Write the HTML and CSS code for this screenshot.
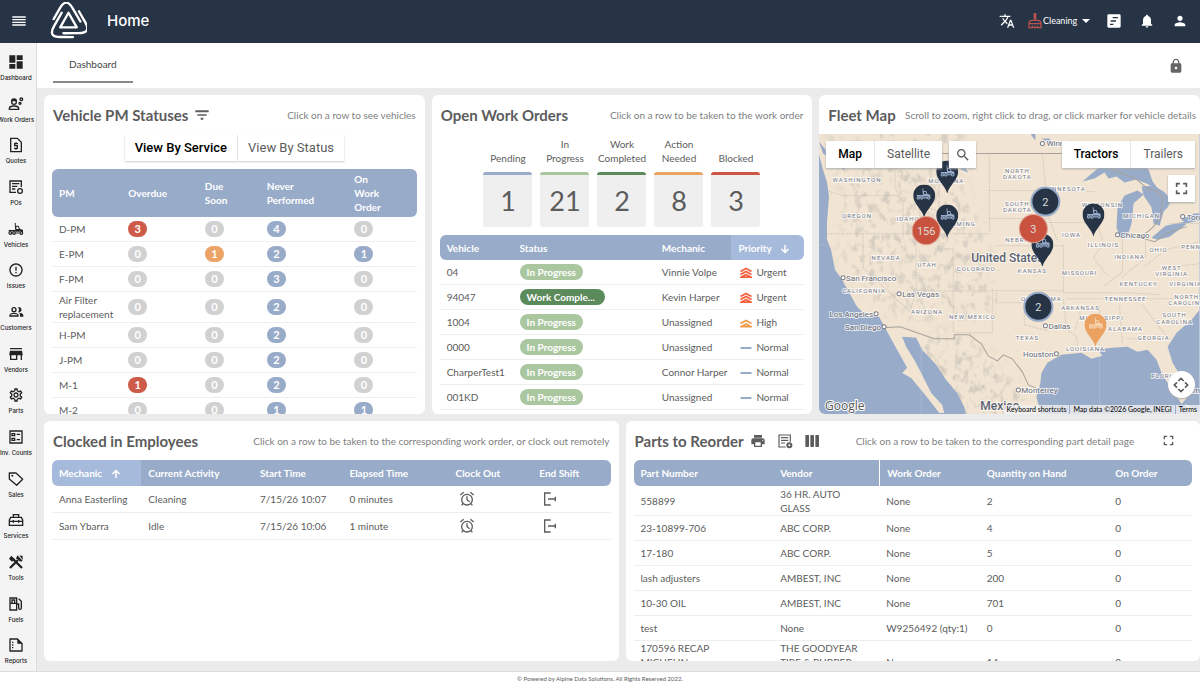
FILE: index.html
```html
<!DOCTYPE html>
<html lang="en">
  <head>
    <meta charset="UTF-8" />
    <meta name="viewport" content="width=device-width, initial-scale=1.0" />
    <title>Home</title>
    <link rel="stylesheet" href="styles.css">
  </head>
  <body>
    <!-- icon sprite -->
    <svg class="sprite" aria-hidden="true">
      <symbol id="i-menu" viewBox="0 0 24 24"><path d="M2 15h20v-2H2v2zm0 4h20v-2H2v2zm0-8h20V9H2v2zm0-6v2h20V5H2z" /></symbol>
      <symbol id="i-translate" viewBox="0 0 24 24"><path d="M12.87 15.07l-2.54-2.51.03-.03c1.74-1.94 2.98-4.17 3.71-6.53H17V4h-7V2H8v2H1v1.99h11.17C11.5 7.92 10.44 9.75 9 11.35 8.07 10.32 7.3 9.19 6.69 8h-2c.73 1.63 1.73 3.17 2.98 4.56l-5.09 5.02L4 19l5-5 3.11 3.11.76-2.04zM18.5 10h-2L12 22h2l1.12-3h4.75L21 22h2l-4.5-12zm-2.62 7l1.62-4.33L19.12 17h-3.24z" /></symbol>
      <symbol id="i-broom" viewBox="0 0 24 24"><path d="M10 0h4v10h-4z" /><path d="M3 22v-6c0-3 2-5 5-5h8c3 0 5 2 5 5v6zM3 16h18M8 22v-3M12 22v-3M16 22v-3" fill="none" stroke="currentColor" stroke-width="2" /></symbol>
      <symbol id="i-note" viewBox="0 0 24 24"><path fill-rule="evenodd" d="M4 2h16a2 2 0 0 1 2 2v16a2 2 0 0 1-2 2H4a2 2 0 0 1-2-2V4a2 2 0 0 1 2-2zM10 6v2h8V6zM7 11v2h8v-2zM6 16v2h5v-2z" /></symbol>
      <symbol id="i-bell" viewBox="0 0 24 24"><path d="M12 22c1.1 0 2-.9 2-2h-4c0 1.1.89 2 2 2zm6-6v-5c0-3.07-1.64-5.64-4.5-6.32V4c0-.83-.67-1.5-1.5-1.5s-1.5.67-1.5 1.5v.68C7.63 5.36 6 7.92 6 11v5l-2 2v1h16v-1l-2-2z" /></symbol>
      <symbol id="i-person" viewBox="0 0 24 24"><path d="M12 12c2.21 0 4-1.79 4-4s-1.79-4-4-4-4 1.79-4 4 1.79 4 4 4zm0 2c-2.67 0-8 1.34-8 4v2h16v-2c0-2.66-5.33-4-8-4z" /></symbol>
      <symbol id="i-lock" viewBox="0 0 24 24"><path d="M18 8h-1V6c0-2.76-2.24-5-5-5S7 3.24 7 6v2H6c-1.1 0-2 .9-2 2v10c0 1.1.9 2 2 2h12c1.1 0 2-.9 2-2V10c0-1.1-.9-2-2-2zm-6 9c-1.1 0-2-.9-2-2s.9-2 2-2 2 .9 2 2-.9 2-2 2zm3.1-9H8.9V6c0-1.71 1.39-3.1 3.1-3.1 1.71 0 3.1 1.39 3.1 3.1v2z" /></symbol>
      <symbol id="i-dashboard" viewBox="0 0 24 24"><path d="M2 13h9V2H2v11zm0 9h9v-7H2v7zm11 0h9V11h-9v11zm0-20v7h9V2h-9z" /></symbol>
      <symbol id="i-work" viewBox="0 0 24 24"><g fill="none" stroke="currentColor" stroke-width="2"><circle cx="9" cy="9" r="3.500" /><path d="M2 20v-1c0-3 4-4 7-4s7 1 7 4v1z" /><circle cx="20" cy="5" r="2" /><circle cx="18" cy="11" r="1.500" /></g><path d="M4.500 8a4.500 4.500 0 0 1 9 0z" /></symbol>
      <symbol id="i-quote" viewBox="0 0 24 24"><g fill="none" stroke="currentColor" stroke-width="2"><path d="M14 2H4v20h16V8z" /><path d="M15 10h-5v3h4v4H9M12 8v2M12 17v2" /></g></symbol>
      <symbol id="i-po" viewBox="0 0 24 24"><g fill="none" stroke="currentColor" stroke-width="2"><path d="M12 20H3V3h17v9M6 7h11M6 11h8M6 15h5" /><circle cx="18" cy="18" r="3.500" /></g></symbol>
      <symbol id="i-truck" viewBox="0 0 24 24"><g fill="none" stroke="currentColor" stroke-width="1.800"><circle cx="3.500" cy="18" r="2" /><circle cx="9" cy="18" r="2" /><circle cx="20" cy="18" r="2" /><path d="M1 14.500h10M11.500 18h6" /></g><path d="M10 3h1.600v4H16l2 5 4.500 1V17h-1a3 3 0 0 0-4.500-1h-6zM12.500 8.500V12h3.800L15 8.500z" fill-rule="evenodd" /></symbol>
      <symbol id="i-issue" viewBox="0 0 24 24"><path d="M11 15h2v2h-2zm0-8h2v6h-2zm.99-5C6.470 2 2 6.480 2 12s4.470 10 9.990 10C17.520 22 22 17.520 22 12S17.520 2 11.990 2zM12 20c-4.420 0-8-3.580-8-8s3.580-8 8-8 8 3.580 8 8-3.580 8-8 8z" /></symbol>
      <symbol id="i-people" viewBox="0 0 24 24"><g fill="none" stroke="currentColor" stroke-width="2"><circle cx="9" cy="8.500" r="3" /><path d="M3 18v-1c0-2 4-3 6-3s6 1 6 3v1z" /></g><path d="M15 4.700a4 4 0 1 1 0 7.600 6 6 0 0 0 0-7.600zM17 13.200c3 .5 6 1.700 6 3.800v2h-5v-2c0-1.500-.4-2.800-1-3.800z" /></symbol>
      <symbol id="i-store" viewBox="0 0 24 24"><path d="M21 3H3v2h18V3zm1 11v-2l-1-5H3l-1 5v2h1v7h11v-7h5v7h2v-7h1zm-10 5H5v-5h7v5z" /></symbol>
      <symbol id="i-gear" viewBox="0 0 24 24"><path d="M19.430 12.980c.04-.32.07-.64.07-.98s-.03-.66-.07-.98l2.110-1.650c.19-.15.24-.42.12-.64l-2-3.460c-.09-.16-.26-.25-.44-.25-.06 0-.12.01-.17.03l-2.490 1c-.52-.4-1.080-.73-1.690-.98l-.38-2.650C14.460 2.180 14.250 2 14 2h-4c-.25 0-.46.18-.49.42l-.38 2.650c-.61.25-1.170.59-1.690.98l-2.490-1c-.06-.02-.12-.03-.18-.03-.17 0-.34.09-.43.25l-2 3.460c-.13.22-.07.49.12.64l2.110 1.650c-.04.32-.07.65-.07.98s.03.66.07.98l-2.110 1.650c-.19.15-.24.42-.12.64l2 3.460c.09.16.26.25.44.25.06 0 .12-.01.17-.03l2.490-1c.52.4 1.080.73 1.690.98l.38 2.650c.03.24.24.42.49.42h4c.25 0 .46-.18.49-.42l.38-2.650c.61-.25 1.170-.59 1.690-.98l2.490 1c.06.02.12.03.18.03.17 0 .34-.09.43-.25l2-3.460c.12-.22.07-.49-.12-.64l-2.110-1.650zm-1.980-1.710c.04.31.05.52.05.73 0 .21-.02.43-.05.73l-.14 1.130.89.7 1.080.84-.7 1.210-1.270-.51-1.040-.42-.9.68c-.43.32-.84.56-1.250.73l-1.060.43-.16 1.130-.2 1.350h-1.400l-.19-1.350-.16-1.130-1.060-.43c-.43-.18-.83-.41-1.230-.71l-.91-.7-1.060.43-1.270.51-.7-1.210 1.080-.84.89-.7-.14-1.130c-.03-.31-.05-.54-.05-.74s.02-.43.05-.73l.14-1.130-.89-.7-1.080-.84.7-1.210 1.270.51 1.040.42.9-.68c.43-.32.84-.56 1.250-.73l1.060-.43.16-1.130.2-1.350h1.390l.19 1.350.16 1.130 1.060.43c.43.18.83.41 1.230.71l.91.7 1.060-.43 1.270-.51.7 1.210-1.070.85-.89.7.14 1.130zM12 8c-2.210 0-4 1.790-4 4s1.790 4 4 4 4-1.790 4-4-1.790-4-4-4zm0 6c-1.100 0-2-.9-2-2s.9-2 2-2 2 .9 2 2-.9 2-2 2z" /></symbol>
      <symbol id="i-count" viewBox="0 0 24 24"><g fill="none" stroke="currentColor" stroke-width="2"><path d="M3 3h18v18H3zM13 8h5M13 16h5" /><path d="M6 7h4v3H6zM6 14h4v3H6z" /></g></symbol>
      <symbol id="i-tag" viewBox="0 0 24 24"><path d="M2 3h10l10 9.500-9 9L2 12z" fill="none" stroke="currentColor" stroke-width="2" stroke-linejoin="round" /><circle cx="6.500" cy="7" r="1.500" /></symbol>
      <symbol id="i-toolbox" viewBox="0 0 24 24"><g fill="none" stroke="currentColor" stroke-width="2"><path d="M8 8V4h8v4M4 8h16l2 4v8H2v-8zM2 14h20M8 12v4M16 12v4" /></g></symbol>
      <symbol id="i-tools" viewBox="0 0 24 24"><g fill="none" stroke="currentColor" stroke-width="3.500"><path d="M3 21L15 9M8 8l13 13" /></g><path d="M1.500 7L5 2.500l5 5-4 4zM14 2l8 8-2.500 1.500-3-1.500-2-2-2.500-1zM17 2l5 1v6z" /></symbol>
      <symbol id="i-fuel" viewBox="0 0 24 24"><g fill="none" stroke="currentColor" stroke-width="2"><path d="M3 21V3h10v18zM3 11h10M13 12h3v6a2 2 0 0 0 4 0V8l-4-4" /><path d="M6 11V6h4v5" /></g></symbol>
      <symbol id="i-report" viewBox="0 0 24 24"><path d="M14 3H3v18h18V10z" fill="none" stroke="currentColor" stroke-width="2" stroke-linejoin="round" /><path d="M14 2l8 8h-8zM6 7h2v2H6zM6 11h2v2H6zM6 15h2v2H6z" /></symbol>
      <symbol id="i-filter" viewBox="0 0 24 24"><path d="M10 19h4v-3h-4v3zM2 5v3h20V5H2zm3 8h14v-2H5v2z" /></symbol>
      <symbol id="i-print" viewBox="0 0 24 24"><path d="M19 8H5c-1.660 0-3 1.340-3 3v6h4v4h12v-4h4v-6c0-1.660-1.340-3-3-3zm-3 11H8v-5h8v5zm3-7c-.55 0-1-.45-1-1s.45-1 1-1 1 .45 1 1-.45 1-1 1zm-1-9H6v4h12V3z" /></symbol>
      <symbol id="i-list" viewBox="0 0 24 24"><path d="M13 21H3V3h17v10M6 7h11M6 11h11M6 15h6" fill="none" stroke="currentColor" stroke-width="1.800" /><circle cx="18.500" cy="18.500" r="4.500" /><circle cx="18.500" cy="18.500" r="1.500" fill="#fff" /></symbol>
      <symbol id="i-columns" viewBox="0 0 24 24"><rect x="2" y="3" width="5.500" height="18" rx="1" /><rect x="9.500" y="3" width="5.500" height="18" rx="1" /><rect x="17" y="3" width="5.500" height="18" rx="1" /></symbol>
      <symbol id="i-full" viewBox="0 0 24 24"><path d="M3 9V3h6M15 3h6v6M21 15v6h-6M9 21H3v-6" fill="none" stroke="currentColor" stroke-width="3" /></symbol>
      <symbol id="i-search" viewBox="0 0 24 24"><path d="M15.500 14h-.79l-.28-.27C15.410 12.590 16 11.110 16 9.500 16 5.910 13.090 3 9.500 3S3 5.910 3 9.500 5.910 16 9.500 16c1.610 0 3.090-.59 4.230-1.570l.27.28v.79l5 4.990L20.490 19l-4.990-5zm-6 0C7.010 14 5 11.990 5 9.500S7.010 5 9.500 5 14 7.010 14 9.500 11.990 14 9.500 14z" /></symbol>
      <symbol id="i-down" viewBox="0 0 24 24"><path d="M12 4v15M5 12l7 7 7-7" fill="none" stroke="currentColor" stroke-width="3" /></symbol>
      <symbol id="i-up" viewBox="0 0 24 24"><path d="M12 20V5M5 12l7-7 7 7" fill="none" stroke="currentColor" stroke-width="3" /></symbol>
      <symbol id="i-alarm" viewBox="0 0 24 24"><g fill="none" stroke="currentColor" stroke-width="2"><circle cx="12" cy="13" r="8" /><path d="M12 8v5l4 3M2 6l5-4M22 6l-5-4M6 19l-2 2.500M18 19l2 2.500" /></g></symbol>
      <symbol id="i-exit" viewBox="0 0 24 24"><path d="M13 3H4v18h9M9 12h12M20 8.500v7" fill="none" stroke="currentColor" stroke-width="2" /></symbol>
      <symbol id="i-urgent" viewBox="0 0 24 24"><path d="M1 9l11-6 11 6M1 15l11-6 11 6M3 20l9-5 9 5z" fill="none" stroke="currentColor" stroke-width="3.500" /></symbol>
      <symbol id="i-high" viewBox="0 0 24 24"><path d="M1 13l11-6 11 6M3 19l9-5 9 5z" fill="none" stroke="currentColor" stroke-width="3.500" /></symbol>
      <symbol id="i-normal" viewBox="0 0 24 24"><path d="M1 12h22" fill="none" stroke="currentColor" stroke-width="4" /></symbol>
      <symbol id="i-pan" viewBox="0 0 24 24"><path d="M8 6l4-4 4 4M8 18l4 4 4-4M6 8l-4 4 4 4M18 8l4 4-4 4" fill="none" stroke="currentColor" stroke-width="2.500" /></symbol>
      <symbol id="pin" viewBox="0 0 22 33"><path d="M11 33C9 25 0 19 0 11a11 11 0 0 1 22 0c0 8-9 14-11 22z" /></symbol>
    </svg>

    <header class="topbar">
      <button class="icon-btn" aria-label="Menu"><svg class="icon"><use href="#i-menu" /></svg></button>
      <svg class="logo" viewBox="-1 -1 38 38">
        <defs><path id="strand" d="M2.700 16.500L9.200 5.300Q15.700-6 22.200 5.300L30.200 19" /></defs>
        <g fill="none" stroke="#fff" stroke-width="2.400" stroke-linecap="round" stroke-linejoin="round">
          <use href="#strand" />
          <use href="#strand" transform="rotate(120 18 20)" />
          <use href="#strand" transform="rotate(240 18 20)" />
          <path d="M18 10l8.500 15h-17z" />
        </g>
      </svg>
      <h1>Home</h1>
      <div class="topbar-right">
        <button class="icon-btn" aria-label="Language"><svg class="icon"><use href="#i-translate" /></svg></button>
        <label class="activity">
          <svg class="icon broom"><use href="#i-broom" /></svg>
          <select aria-label="Activity"><option>Cleaning</option></select>
          <span class="caret"></span>
        </label>
        <button class="icon-btn" aria-label="Notes"><svg class="icon"><use href="#i-note" /></svg></button>
        <button class="icon-btn" aria-label="Notifications"><svg class="icon"><use href="#i-bell" /></svg></button>
        <button class="icon-btn" aria-label="Account"><svg class="icon"><use href="#i-person" /></svg></button>
      </div>
    </header>

    <div class="layout">
      <nav class="sidebar">
        <a href="#"><svg class="icon"><use href="#i-dashboard" /></svg><span>Dashboard</span></a>
        <a href="#"><svg class="icon"><use href="#i-work" /></svg><span>Work Orders</span></a>
        <a href="#"><svg class="icon"><use href="#i-quote" /></svg><span>Quotes</span></a>
        <a href="#"><svg class="icon"><use href="#i-po" /></svg><span>POs</span></a>
        <a href="#"><svg class="icon"><use href="#i-truck" /></svg><span>Vehicles</span></a>
        <a href="#"><svg class="icon"><use href="#i-issue" /></svg><span>Issues</span></a>
        <a href="#"><svg class="icon"><use href="#i-people" /></svg><span>Customers</span></a>
        <a href="#"><svg class="icon"><use href="#i-store" /></svg><span>Vendors</span></a>
        <a href="#"><svg class="icon"><use href="#i-gear" /></svg><span>Parts</span></a>
        <a href="#"><svg class="icon"><use href="#i-count" /></svg><span>Inv. Counts</span></a>
        <a href="#"><svg class="icon"><use href="#i-tag" /></svg><span>Sales</span></a>
        <a href="#"><svg class="icon"><use href="#i-toolbox" /></svg><span>Services</span></a>
        <a href="#"><svg class="icon"><use href="#i-tools" /></svg><span>Tools</span></a>
        <a href="#"><svg class="icon"><use href="#i-fuel" /></svg><span>Fuels</span></a>
        <a href="#"><svg class="icon"><use href="#i-report" /></svg><span>Reports</span></a>
      </nav>

      <main>
        <div class="tabs">
          <a href="#" class="tab">Dashboard</a>
          <button class="icon-btn lock" aria-label="Lock layout"><svg class="icon"><use href="#i-lock" /></svg></button>
        </div>

        <div class="board">
          <div class="row three">
            <section class="card">
              <div class="card-head">
                <h2>Vehicle PM Statuses</h2>
                <button class="icon-btn" aria-label="Filter"><svg class="icon"><use href="#i-filter" /></svg></button>
                <p>Click on a row to see vehicles</p>
              </div>
              <div class="toggle">
                <button class="on">View By Service</button>
                <button>View By Status</button>
              </div>
              <table class="pm">
                <colgroup><col class="w19"><col class="w21"><col class="w17"><col class="w24"><col class="w19"></colgroup>
                <thead>
                  <tr><th>PM</th><th>Overdue</th><th>Due<br>Soon</th><th>Never<br>Performed</th><th>On<br>Work<br>Order</th></tr>
                </thead>
                <tbody>
                  <tr><td>D-PM</td><td><b class="dot red">3</b></td><td><b class="dot">0</b></td><td><b class="dot blue">4</b></td><td><b class="dot">0</b></td></tr>
                  <tr><td>E-PM</td><td><b class="dot">0</b></td><td><b class="dot orange">1</b></td><td><b class="dot blue">2</b></td><td><b class="dot blue">1</b></td></tr>
                  <tr><td>F-PM</td><td><b class="dot">0</b></td><td><b class="dot">0</b></td><td><b class="dot blue">3</b></td><td><b class="dot">0</b></td></tr>
                  <tr><td>Air Filter replacement</td><td><b class="dot">0</b></td><td><b class="dot">0</b></td><td><b class="dot blue">2</b></td><td><b class="dot">0</b></td></tr>
                  <tr><td>H-PM</td><td><b class="dot">0</b></td><td><b class="dot">0</b></td><td><b class="dot blue">2</b></td><td><b class="dot">0</b></td></tr>
                  <tr><td>J-PM</td><td><b class="dot">0</b></td><td><b class="dot">0</b></td><td><b class="dot blue">2</b></td><td><b class="dot">0</b></td></tr>
                  <tr><td>M-1</td><td><b class="dot red">1</b></td><td><b class="dot">0</b></td><td><b class="dot blue">2</b></td><td><b class="dot">0</b></td></tr>
                  <tr><td>M-2</td><td><b class="dot">0</b></td><td><b class="dot">0</b></td><td><b class="dot blue">1</b></td><td><b class="dot blue">1</b></td></tr>
                </tbody>
              </table>
            </section>

            <section class="card">
              <div class="card-head">
                <h2>Open Work Orders</h2>
                <p>Click on a row to be taken to the work order</p>
              </div>
              <div class="stats">
                <div class="stat s-blue"><span>Pending</span><strong>1</strong></div>
                <div class="stat s-light"><span>In<br>Progress</span><strong>21</strong></div>
                <div class="stat s-green"><span>Work Completed</span><strong>2</strong></div>
                <div class="stat s-orange"><span>Action Needed</span><strong>8</strong></div>
                <div class="stat s-red"><span>Blocked</span><strong>3</strong></div>
              </div>
              <table class="orders">
                <colgroup><col class="w20"><col class="w39"><col class="w21"><col class="w20"></colgroup>
                <thead>
                  <tr><th>Vehicle</th><th>Status</th><th>Mechanic</th><th class="sorted">Priority <svg class="icon"><use href="#i-down" /></svg></th></tr>
                </thead>
                <tbody>
                  <tr><td>04</td><td><span class="pill">In Progress</span></td><td>Vinnie Volpe</td><td><svg class="icon urgent"><use href="#i-urgent" /></svg>Urgent</td></tr>
                  <tr><td>94047</td><td><span class="pill done">Work Comple...</span></td><td>Kevin Harper</td><td><svg class="icon urgent"><use href="#i-urgent" /></svg>Urgent</td></tr>
                  <tr><td>1004</td><td><span class="pill">In Progress</span></td><td>Unassigned</td><td><svg class="icon high"><use href="#i-high" /></svg>High</td></tr>
                  <tr><td>0000</td><td><span class="pill">In Progress</span></td><td>Unassigned</td><td><svg class="icon normal"><use href="#i-normal" /></svg>Normal</td></tr>
                  <tr><td>CharperTest1</td><td><span class="pill">In Progress</span></td><td>Connor Harper</td><td><svg class="icon normal"><use href="#i-normal" /></svg>Normal</td></tr>
                  <tr><td>001KD</td><td><span class="pill">In Progress</span></td><td>Unassigned</td><td><svg class="icon normal"><use href="#i-normal" /></svg>Normal</td></tr>
                  <tr><td></td><td><span class="pill">In Progress</span></td><td></td><td></td></tr>
                </tbody>
              </table>
            </section>

            <section class="card map-card">
              <div class="card-head">
                <h2>Fleet Map</h2>
                <p>Scroll to zoom, right click to drag, or click marker for vehicle details</p>
              </div>
              <div class="map">
                <svg class="map-canvas" viewBox="0 0 380 281" preserveAspectRatio="xMidYMid slice">
                  <defs>
                    <filter id="relief" x="0" y="0" width="100%" height="100%">
                      <feTurbulence type="fractalNoise" baseFrequency="0.14 0.1" numOctaves="5" seed="8" />
                      <feColorMatrix values="0 0 0 0 .5  0 0 0 0 .48  0 0 0 0 .44  4 0 0 0 -2" />
                    </filter>
                    <filter id="soft"><feGaussianBlur stdDeviation="7" /></filter>
                    <mask id="hills">
                      <g filter="url(#soft)" fill="#fff">
                        <path d="M8 -10L150 -10 135 30 165 100 175 175 140 190 70 180 20 130 25 60z" fill-opacity=".5" />
                        <path d="M90 200l60 5 50 50 10 40h-50L110 235z" fill-opacity=".6" />
                      </g>
                    </mask>
                    <clipPath id="land">
                      <path d="M0 0H380V176L372 186 357 199 348 213 353 229 363 246 368 263 362 270 348 249 342 239 337 226 328 216 318 218 308 213 292 214 278 216 283 222 272 225 262 219 242 221 228 229 222 239 221 249 217 263 222 281H147L145 273 138 259 127 246 117 231 103 216 97 204 83 203 87 213 95 226 102 239 112 259 123 271 125 279 120 279 110 266 102 256 92 244 83 239 88 234 78 216 67 196 60 183 48 183 38 173 23 146 16 136 12 116 8 106 8 89 10 63 8 49 4 36 0 21z" />
                    </clipPath>
                  </defs>
                  <rect width="380" height="281" fill="#98abc9" />
                  <g clip-path="url(#land)">
                    <rect width="380" height="281" fill="#f1e4d2" />
                    <g mask="url(#hills)"><rect width="380" height="281" filter="url(#relief)" /></g>
                  </g>
                  <!-- great lakes and smaller water -->
                  <g fill="#98abc9">
                    <path d="M263 48l14-12 12-8h30l10 8 4 12 6 8-12-6-10-4-12 3-8-6-8 2-4-6-10 6z" />
                    <path d="M318 57l-13 5-7 12-1 20 4 10 7-2 4-12 2-20 10-9z" />
                    <path d="M322 53l12-1 10 6 8 8-4 8-4 4-4 14-6-2-2-16-8-12z" />
                    <path d="M332 104l14-12 20-4v3l-16 12-12 3zM362 86l12-6h6v7l-14 3zM211 0h5v7l-3-4zM222 5h8l6 9-5-4zM0 8l8 10 2 6-6-4z" />
                    <path d="M372 263l4 2 4 6-5 2-4-5zM22 25l4 10-2 2-3-8zM144 31l-3 5 8 3z" />
                  </g>
                  <path d="M365 270l5 2 10 8h-8z" fill="#f1e4d2" />
                  <g fill="none" stroke="#a6a29b">
                    <path d="M30 20H262l20 8 12 9 22 8 12 10 10 3 5 6-2 20-8 10-12 10 14 4 14-9 18-6" />
                    <path d="M64 194l17-1 34 12h20v-4h15l12 9 7 12 9 5 6-6 9 4 10 13 6 13 12 5" />
                  </g>
                  <!-- state lines -->
                  <path d="M10 58l15 4h54M8 100h112M76 20v34l8 16v36M44 100v34l48 45M97 100v57l-6 20M84 34l12 16 8 22 16 6M120 57v43h50M120 57V35M120 100v15h14v40M97 157h147M134 157v42M173 155v44h-38M177 112h68M170 21v78M170 57h56M170 85h60M223 21l3 30 4 34 8 22M226 58h50M230 89h48M244 112v47M177 157v12h28v22l24 6M244 159h64l34 2M244 165l3 30 10 8 2 14M262 172l-6 24M280 172v42M300 172l3 38M308 205h30M322 170l18 24 10 12M247 165h110M278 90l6 20-10 14 14 18M303 104v34l-18 14M326 104v20l-24 20M326 132l20-16 34-8M350 90h30M340 140l22-8 18-2" fill="none" stroke="#c9c2b8" stroke-dasharray="1 1" />
                  <path d="M102 100v181M280 200v81M0 111h8" stroke="#fff" stroke-opacity=".15" />

                  <g class="state">
                    <text x="38" y="48">WASHINGTON</text><text x="127" y="49">MONTANA</text>
                    <text x="38" y="84">OREGON</text><text x="89" y="87">IDAHO</text><text x="139" y="92">WYOMING</text>
                    <text x="67" y="126">NEVADA</text><text x="198" y="39">NORTH</text><text x="198" y="45">DAKOTA</text>
                    <text x="245" y="57">MINNESOTA</text><text x="198" y="72">SOUTH</text><text x="198" y="78">DAKOTA</text>
                    <text x="205" y="108">NEBRASKA</text><text x="283" y="73">WISCONSIN</text><text x="322" y="84">MICHIGAN</text>
                    <text x="252" y="103">IOWA</text><text x="284" y="113">ILLINOIS</text><text x="339" y="118">OHIO</text>
                    <text x="310" y="125">INDIANA</text><text x="389" y="115">PENNSYLVANIA</text><text x="108" y="133">UTAH</text>
                    <text x="157" y="137">COLORADO</text><text x="213" y="139">KANSAS</text><text x="260" y="141">MISSOURI</text>
                    <text x="352" y="136">WEST</text><text x="352" y="142">VIRGINIA</text><text x="319" y="152">KENTUCKY</text>
                    <text x="366" y="152">VIRGINIA</text><text x="45" y="159">CALIFORNIA</text><text x="108" y="180">ARIZONA</text>
                    <text x="153" y="185">NEW MEXICO</text><text x="222" y="167">OKLAHOMA</text><text x="261" y="176">ARKANSAS</text>
                    <text x="306" y="167">TENNESSEE</text><text x="367" y="165">NORTH</text><text x="367" y="171">CAROLINA</text>
                    <text x="282" y="186">MISSISSIPPI</text><text x="306" y="197">ALABAMA</text><text x="355" y="183">SOUTH</text>
                    <text x="355" y="190">CAROLINA</text><text x="208" y="206">TEXAS</text><text x="334" y="206">GEORGIA</text>
                    <text x="266" y="217">LOUISIANA</text><text x="347" y="244">FLORIDA</text>
                  </g>
                  <g class="city">
                    <text x="227" y="13">Winnipeg</text><text x="367" y="86">Toronto</text><text x="301" y="104">Chicago</text>
                    <text x="27" y="147">San Francisco</text><text x="83" y="163">Las Vegas</text><text x="229" y="195">Dallas</text>
                    <text x="202" y="259">Monterrey</text><text x="360" y="259">Miami</text>
                    <g text-anchor="end"><text x="54" y="183">Los Angeles</text><text x="62" y="196">San Diego</text><text x="234" y="223">Houston</text></g>
                  </g>
                  <g fill="#fff" stroke="#7b7f87">
                    <circle cx="223" cy="10" r="2" /><circle cx="363" cy="83" r="2" /><circle cx="298" cy="101" r="2" />
                    <circle cx="24" cy="144" r="2" /><circle cx="80" cy="160" r="2" /><circle cx="57" cy="180" r="2" />
                    <circle cx="65" cy="193" r="2" /><circle cx="226" cy="192" r="2" /><circle cx="237" cy="220" r="2" /><circle cx="199" cy="256" r="2" />
                  </g>
                  <g class="country"><text x="152" y="128">United States</text><text x="161" y="276">Mexico</text></g>
                  <text class="google" x="6" y="276">Google</text>

                  <g fill="#263446" color="#98abc9">
                    <use href="#pin" x="117" y="27" width="22" height="33" />
                    <use href="#pin" x="94" y="51" width="22" height="33" />
                    <use href="#pin" x="117" y="71" width="22" height="33" />
                    <use href="#pin" x="263" y="70" width="22" height="33" />
                    <use href="#pin" x="212" y="100" width="22" height="33" />
                    <use href="#pin" x="265" y="180" width="22" height="33" fill="#eba160" />
                  </g>
                  <g fill="#98abc9" color="#98abc9">
                    <use href="#i-truck" x="121" y="30" width="15" height="15" />
                    <use href="#i-truck" x="97" y="53" width="15" height="15" />
                    <use href="#i-truck" x="121" y="73" width="15" height="15" />
                    <use href="#i-truck" x="267" y="72" width="15" height="15" />
                    <use href="#i-truck" x="216" y="101" width="15" height="15" />
                  </g>
                  <g fill="#f6d9b8" color="#f6d9b8"><use href="#i-truck" x="269" y="182" width="15" height="15" /></g>
                  <g class="cluster">
                    <circle cx="107" cy="97" r="14" fill="#c9523f" stroke="#e0a595" /><text x="107" y="101">156</text>
                    <circle cx="226" cy="68" r="14" fill="#263446" stroke="#98abc9" stroke-width="2" /><text x="226" y="72">2</text>
                    <circle cx="214" cy="95" r="14" fill="#c9523f" stroke="#e0a595" /><text x="214" y="99">3</text>
                    <circle cx="219" cy="173" r="14" fill="#263446" stroke="#98abc9" stroke-width="2" /><text x="219" y="177">2</text>
                  </g>
                </svg>
                <div class="map-top">
                  <div class="map-toggle"><button class="on">Map</button><button>Satellite</button></div>
                  <button class="square" aria-label="Search"><svg class="icon"><use href="#i-search" /></svg></button>
                  <div class="map-toggle end"><button class="on">Tractors</button><button>Trailers</button></div>
                </div>
                <button class="square full" aria-label="Full screen"><svg class="icon"><use href="#i-full" /></svg></button>
                <button class="square pan" aria-label="Pan"><svg class="icon"><use href="#i-pan" /></svg></button>
                <div class="credits"><a href="#">Keyboard shortcuts</a><span>Map data ©2026 Google, INEGI</span><a href="#">Terms</a></div>
              </div>
            </section>
          </div>

          <div class="row two">
            <section class="card">
              <div class="card-head">
                <h2>Clocked in Employees</h2>
                <p>Click on a row to be taken to the corresponding work order, or clock out remotely</p>
              </div>
              <table class="clocked">
                <colgroup><col class="w16"><col class="w20"><col class="w16"><col class="w19"><col class="w15"><col class="w14"></colgroup>
                <thead>
                  <tr><th class="sorted">Mechanic <svg class="icon"><use href="#i-up" /></svg></th><th>Current Activity</th><th>Start Time</th><th>Elapsed Time</th><th>Clock Out</th><th>End Shift</th></tr>
                </thead>
                <tbody>
                  <tr><td>Anna Easterling</td><td>Cleaning</td><td>7/15/26 10:07</td><td>0 minutes</td><td><button class="icon-btn" aria-label="Clock out"><svg class="icon"><use href="#i-alarm" /></svg></button></td><td><button class="icon-btn" aria-label="End shift"><svg class="icon"><use href="#i-exit" /></svg></button></td></tr>
                  <tr><td>Sam Ybarra</td><td>Idle</td><td>7/15/26 10:06</td><td>1 minute</td><td><button class="icon-btn" aria-label="Clock out"><svg class="icon"><use href="#i-alarm" /></svg></button></td><td><button class="icon-btn" aria-label="End shift"><svg class="icon"><use href="#i-exit" /></svg></button></td></tr>
                </tbody>
              </table>
            </section>

            <section class="card parts-card">
              <div class="card-head">
                <h2>Parts to Reorder</h2>
                <div class="tools">
                  <button class="icon-btn" aria-label="Print"><svg class="icon"><use href="#i-print" /></svg></button>
                  <button class="icon-btn" aria-label="Purchase orders"><svg class="icon"><use href="#i-list" /></svg></button>
                  <button class="icon-btn" aria-label="Columns"><svg class="icon"><use href="#i-columns" /></svg></button>
                </div>
                <p>Click on a row to be taken to the corresponding part detail page</p>
                <button class="icon-btn expand" aria-label="Expand"><svg class="icon"><use href="#i-full" /></svg></button>
              </div>
              <table class="parts">
                <colgroup><col class="w25"><col class="w19"><col class="w18"><col class="w23"><col class="w15"></colgroup>
                <thead>
                  <tr><th>Part Number</th><th>Vendor</th><th class="split">Work Order</th><th>Quantity on Hand</th><th>On Order</th></tr>
                </thead>
                <tbody>
                  <tr><td>558899</td><td>36 HR. AUTO<br>GLASS</td><td>None</td><td>2</td><td>0</td></tr>
                  <tr><td>23-10899-706</td><td>ABC CORP.</td><td>None</td><td>4</td><td>0</td></tr>
                  <tr><td>17-180</td><td>ABC CORP.</td><td>None</td><td>5</td><td>0</td></tr>
                  <tr><td>lash adjusters</td><td>AMBEST, INC</td><td>None</td><td>200</td><td>0</td></tr>
                  <tr><td>10-30 OIL</td><td>AMBEST, INC</td><td>None</td><td>701</td><td>0</td></tr>
                  <tr><td>test</td><td>None</td><td>W9256492 (qty:1)</td><td>0</td><td>0</td></tr>
                  <tr><td>170596 RECAP<br>MICHELIN<br>TIRE</td><td>THE GOODYEAR<br>TIRE &amp; RUBBER<br>CO</td><td>None</td><td>14</td><td>0</td></tr>
                </tbody>
              </table>
            </section>
          </div>
        </div>
      </main>
    </div>

    <footer>© Powered by Alpine Data Solutions. All Rights Reserved 2022.</footer>
  </body>
</html>
```
FILE: styles.css
```css
* {
  box-sizing: border-box;
  margin: 0;
  padding: 0;
}
body {
  display: flex;
  flex-direction: column;
  height: 100vh;
  overflow: hidden;
  font-family: Lato, "Liberation Sans", sans-serif;
  font-size: 10px;
  line-height: 14px;
  color: #5c5c5c;
  background-color: #fff;
}
button,
select {
  font: inherit;
  color: inherit;
  border: none;
  background: none;
  cursor: pointer;
}
a {
  color: inherit;
  text-decoration: none;
}
.sprite {
  position: absolute;
  width: 0;
  height: 0;
}
.icon {
  display: block;
  width: 16px;
  height: 16px;
  fill: currentColor;
  flex-shrink: 0;
}
.icon-btn {
  display: block;
}

/* top bar */
.topbar {
  display: flex;
  align-items: center;
  height: 43px;
  padding: 0 12px 2px 11px;
  color: #fff;
  background-color: #273446;
  flex-shrink: 0;
}
.topbar h1 {
  font: 500 15px/20px Inter, sans-serif;
  margin-left: 20px;
}
.logo {
  width: 37px;
  height: 37px;
  margin-left: 23px;
}
.topbar-right {
  display: flex;
  align-items: center;
  gap: 17px;
  margin-left: auto;
}
.activity {
  display: flex;
  align-items: center;
  margin: 0 -1px 0 -5px;
}
.activity select {
  appearance: none;
  width: 39px;
  font-size: 9px;
}
.broom {
  color: #b8524e;
}
.caret {
  border: 4px solid transparent;
  border-top-color: #fff;
  border-bottom: 0;
}

/* sidebar */
.layout {
  display: flex;
  flex: 1;
  min-height: 0;
}
.sidebar {
  display: flex;
  flex-direction: column;
  width: 37px;
  padding-bottom: 3px;
  color: #222;
  background-color: #f4f4f4;
  border-right: 1px solid #ddd;
  overflow: hidden;
  flex-shrink: 0;
}
.sidebar a {
  display: flex;
  flex-direction: column;
  align-items: center;
  flex: 1;
  gap: 4px;
  width: 32px;
  padding-top: 11px;
}
.sidebar span {
  font: 500 6px/8px Inter, sans-serif;
  white-space: nowrap;
}

main {
  display: flex;
  flex-direction: column;
  flex: 1;
  min-width: 0;
}
.tabs {
  display: flex;
  align-items: center;
  justify-content: space-between;
  height: 45px;
  padding: 0 16px;
  flex-shrink: 0;
}
.tab {
  padding: 9px 16px 10px;
  color: #444;
  border-bottom: 2px solid #888;
}
.lock {
  color: #666;
}
.board {
  display: grid;
  grid-template-rows: 4fr 3fr;
  gap: 7px;
  flex: 1;
  min-height: 0;
  padding: 7px 0 10px 7px;
  background-color: #ebebeb;
}
.row {
  display: grid;
  gap: 7px;
  min-height: 0;
}
.three {
  grid-template-columns: repeat(3, minmax(0, 1fr));
}
.two {
  grid-template-columns: repeat(2, minmax(0, 1fr));
}

/* cards */
.card {
  min-height: 0;
  padding: 0 8px;
  background-color: #fff;
  border-radius: 6px;
  overflow: hidden;
}
.card-head {
  display: flex;
  align-items: center;
  gap: 6px;
  height: 39px;
  padding: 0 1px;
}
h2 {
  font-size: 15px;
  line-height: 20px;
  font-weight: 700;
  white-space: nowrap;
}
.card-head p {
  margin-left: auto;
  color: #808080;
  white-space: nowrap;
}
.toggle {
  display: flex;
  justify-content: center;
  gap: 1px;
  margin-bottom: 8px;
  font: 13px/27px Roboto, sans-serif;
}
.toggle button {
  padding: 0 10px;
  box-shadow: 0 1px 2px #ccc;
}
.toggle .on,
.map-toggle .on {
  font-weight: 500;
  color: #000;
}

/* tables */
table {
  width: 100%;
  table-layout: fixed;
  border-spacing: 0;
}
.w14 { width: 14%; }
.w15 { width: 15%; }
.w16 { width: 16%; }
.w17 { width: 17%; }
.w18 { width: 18%; }
.w19 { width: 19%; }
.w20 { width: 20%; }
.w21 { width: 21%; }
.w23 { width: 23%; }
.w24 { width: 24%; }
.w25 { width: 25%; }
.w39 { width: 39%; }
th {
  height: 25px;
  padding: 0 7px;
  color: #fff;
  font-weight: 700;
  text-align: left;
  background-color: #98abc9;
}
th:first-child {
  border-radius: 6px 0 0 6px;
}
th:last-child {
  border-radius: 0 6px 6px 0;
}
td {
  height: 25px;
  padding: 0 7px;
  border-bottom: 1px solid #eee;
  white-space: nowrap;
}
th.sorted {
  background-color: #a6bbdc;
}
th .icon {
  display: inline-block;
  width: 12px;
  height: 12px;
  margin-left: 5px;
  vertical-align: -3px;
}
.pm th {
  height: 48px;
}
.pm td:first-child {
  padding: 1px 7px;
  white-space: normal;
}
.dot {
  display: block;
  width: 19px;
  font-size: 11px;
  line-height: 16px;
  border-radius: 8px;
  color: #fff;
  text-align: center;
  background-color: #d1d1d1;
}
.red {
  background-color: #ce5b49;
}
.blue {
  background-color: #98abc9;
}
.orange {
  background-color: #eba367;
}

.stats {
  display: flex;
  justify-content: center;
  align-items: flex-end;
  gap: 8px;
  margin: 3px 0 8px;
}
.stat {
  display: flex;
  flex-direction: column;
  align-items: center;
  gap: 7px;
  width: 49px;
  text-align: center;
}
.stat strong {
  width: 100%;
  font-size: 27px;
  font-weight: 400;
  line-height: 52px;
  border-top: 3px solid #98abc9;
  border-radius: 3px;
  background-color: #efefef;
}
.s-light strong {
  border-color: #a8c59d;
}
.s-green strong {
  border-color: #5b8a5b;
}
.s-orange strong {
  border-color: #eba160;
}
.s-red strong {
  border-color: #ce5443;
}
.pill {
  display: inline-block;
  padding: 0 7px;
  line-height: 16px;
  border-radius: 8px;
  color: #fff;
  font-weight: 700;
  background-color: #aac7a0;
}
.done {
  padding-right: 10px;
  background-color: #5b8a5b;
}
td > .icon {
  display: inline-block;
  width: 12px;
  height: 12px;
  margin: 0 4px 0 2px;
  vertical-align: -3px;
}
.urgent {
  color: #f4613f;
}
.high {
  color: #f2994a;
}
.normal {
  color: #98abc9;
}
.clocked td {
  height: 27px;
}
.clocked td .icon-btn {
  margin-left: 3px;
}
.parts .split {
  border-left: 1px solid #fff;
}
.parts tr:first-child td {
  height: 30px;
}
.clocked th,
.parts th {
  height: 26px;
}
.parts-card .card-head p {
  margin-left: 30px;
}
.tools {
  display: flex;
  gap: 11px;
}
.card-head .expand {
  margin: 0 17px 0 auto;
}
.expand .icon {
  width: 11px;
  height: 11px;
}

/* map */
.map-card {
  display: flex;
  flex-direction: column;
  padding: 0;
}
.map-card .card-head {
  flex-shrink: 0;
  padding: 0 4px 0 9px;
}
.map {
  position: relative;
  flex: 1;
  min-height: 0;
  font-family: Roboto, sans-serif;
}
.map-canvas {
  display: block;
  width: 100%;
  height: 100%;
}
.state text,
.city text,
.country text {
  fill: #75798a;
  stroke: #fff;
  stroke-width: 2px;
  stroke-opacity: 0.7;
  paint-order: stroke;
}
.state text {
  font-size: 6px;
  letter-spacing: 1px;
  text-anchor: middle;
}
.city text {
  font-size: 8px;
  fill: #666a75;
}
.country text {
  font-size: 12px;
  font-weight: 500;
  fill: #5d6270;
}
.google {
  font: 500 12px "Open Sans", sans-serif;
  fill: #555;
  stroke: #fff;
  stroke-width: 2px;
  paint-order: stroke;
}
.cluster text {
  font-size: 11px;
  fill: #ddd;
  text-anchor: middle;
}
.map-top {
  position: absolute;
  top: 7px;
  left: 7px;
  right: 5px;
  display: flex;
  gap: 7px;
}
.map-toggle {
  display: flex;
  font-size: 12px;
  line-height: 27px;
  background-color: #fff;
  box-shadow: 0 1px 2px #aaa;
}
.end {
  margin-left: auto;
}
.map-toggle button {
  padding: 0 12px;
}
.map-toggle button + button {
  border-left: 1px solid #e6e6e6;
}
.square {
  display: grid;
  place-items: center;
  width: 27px;
  height: 27px;
  background-color: #fff;
  box-shadow: 0 1px 2px #aaa;
}
.full {
  position: absolute;
  top: 41px;
  right: 5px;
}
.full .icon {
  width: 13px;
  height: 13px;
}
.pan {
  position: absolute;
  right: 5px;
  bottom: 16px;
  border-radius: 50%;
}
.credits {
  position: absolute;
  right: 0;
  bottom: 0;
  display: flex;
  font: 7px/9px Lato, sans-serif;
  color: #000;
}
.credits > * {
  margin-left: 1px;
  padding: 0 3px;
  background-color: #f1f1f1cc;
}

footer {
  height: 29px;
  padding-top: 2px;
  border-top: 1px solid #ddd;
  font-size: 6px;
  line-height: 9px;
  text-align: center;
  flex-shrink: 0;
}
```
